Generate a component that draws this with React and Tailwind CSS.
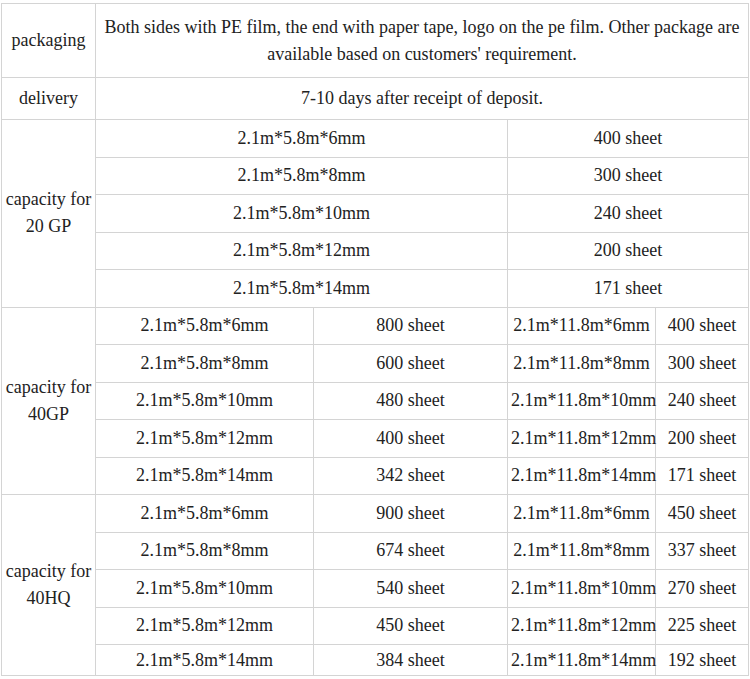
const groups = [
  {
    label: ["capacity for", "20 GP"],
    wide: true,
    rows: [
      ["2.1m*5.8m*6mm", "400 sheet"],
      ["2.1m*5.8m*8mm", "300 sheet"],
      ["2.1m*5.8m*10mm", "240 sheet"],
      ["2.1m*5.8m*12mm", "200 sheet"],
      ["2.1m*5.8m*14mm", "171 sheet"],
    ],
  },
  {
    label: ["capacity for", "40GP"],
    rows: [
      ["2.1m*5.8m*6mm", "800 sheet", "2.1m*11.8m*6mm", "400 sheet"],
      ["2.1m*5.8m*8mm", "600 sheet", "2.1m*11.8m*8mm", "300 sheet"],
      ["2.1m*5.8m*10mm", "480 sheet", "2.1m*11.8m*10mm", "240 sheet"],
      ["2.1m*5.8m*12mm", "400 sheet", "2.1m*11.8m*12mm", "200 sheet"],
      ["2.1m*5.8m*14mm", "342 sheet", "2.1m*11.8m*14mm", "171 sheet"],
    ],
  },
  {
    label: ["capacity for", "40HQ"],
    rows: [
      ["2.1m*5.8m*6mm", "900 sheet", "2.1m*11.8m*6mm", "450 sheet"],
      ["2.1m*5.8m*8mm", "674 sheet", "2.1m*11.8m*8mm", "337 sheet"],
      ["2.1m*5.8m*10mm", "540 sheet", "2.1m*11.8m*10mm", "270 sheet"],
      ["2.1m*5.8m*12mm", "450 sheet", "2.1m*11.8m*12mm", "225 sheet"],
      ["2.1m*5.8m*14mm", "384 sheet", "2.1m*11.8m*14mm", "192 sheet"],
    ],
  },
];

const cell = "border border-[#d4d4d4] text-center align-middle px-[3px] p-0";

export default function App() {
  return (
    <div className="bg-white w-[750px] h-[679px] overflow-hidden pt-[3px] pl-[1px] text-[18px] leading-[27px] text-[#222] font-[family-name:'Liberation_Serif','Times_New_Roman',serif]">
      <table className="table-fixed border-collapse w-[747px]">
        <colgroup>
          <col className="w-[94px]" />
          <col className="w-[218px]" />
          <col className="w-[194px]" />
          <col className="w-[148px]" />
          <col className="w-[93px]" />
        </colgroup>
        <tbody>
          <tr className="h-[74px]">
            <td className={cell}>packaging</td>
            <td className={cell + " px-2"} colSpan={4}>
              Both sides with PE film, the end with paper tape, logo on the pe film. Other package are available based on customers' requirement.
            </td>
          </tr>
          <tr className="h-[42px]">
            <td className={cell}>delivery</td>
            <td className={cell} colSpan={4}>
              7-10 days after receipt of deposit.
            </td>
          </tr>
          {groups.map((g, gi) =>
            g.rows.map((r, ri) => {
              const last = gi === groups.length - 1 && ri === g.rows.length - 1;
              return (
                <tr key={gi + "-" + ri} className={last ? "h-[31px]" : "h-[37.5px]"}>
                  {ri === 0 && (
                    <td className={cell} rowSpan={g.rows.length}>
                      {g.label[0]}
                      <br />
                      {g.label[1]}
                    </td>
                  )}
                  {g.wide ? (
                    <>
                      <td className={cell} colSpan={2}>{r[0]}</td>
                      <td className={cell} colSpan={2}>{r[1]}</td>
                    </>
                  ) : (
                    <>
                      <td className={cell}>{r[0]}</td>
                      <td className={cell}>{r[1]}</td>
                      <td className={cell + " whitespace-nowrap"}>{r[2]}</td>
                      <td className={cell + " whitespace-nowrap"}>{r[3]}</td>
                    </>
                  )}
                </tr>
              );
            })
          )}
        </tbody>
      </table>
    </div>
  );
}
